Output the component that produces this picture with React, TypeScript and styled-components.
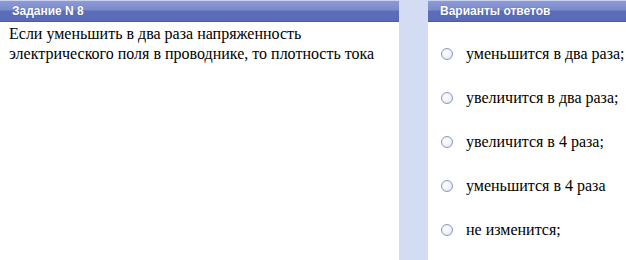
import React from 'react';
import styled, { createGlobalStyle } from 'styled-components';

const OPTIONS = [
  'уменьшится в два раза;',
  'увеличится в два раза;',
  'увеличится в 4 раза;',
  'уменьшится в 4 раза',
  'не изменится;',
];

const GlobalStyle = createGlobalStyle`
  html, body {
    margin: 0;
    padding: 0;
    background: #ffffff;
  }
  body {
    width: 626px;
    height: 260px;
    overflow: hidden;
  }
`;

const App = () => {
  return (
    <>
      <GlobalStyle />
      <Page>
        <Panel>
          <Header>Задание N 8</Header>
          <Question>
            Если уменьшить в два раза напряженность электрического поля в проводнике, то плотность тока
          </Question>
        </Panel>
        <Gutter />
        <Panel>
          <Header>Варианты ответов</Header>
          <AnswerList>
            {OPTIONS.map((text, idx) => (
              <Answer key={idx}>
                <Radio />
                <AnswerText>{text}</AnswerText>
              </Answer>
            ))}
          </AnswerList>
        </Panel>
      </Page>
    </>
  );
};

const Page = styled.div`
  display: grid;
  grid-template-columns: 399px 29px 198px;
  height: 260px;
  background: #ffffff;
`;

const Panel = styled.section`
  display: flex;
  flex-direction: column;
  background: #ffffff;
`;

const Gutter = styled.div`
  background: #d3dcf2;
`;

const Header = styled.div`
  height: 20px;
  padding-left: 12px;
  border-top: 1px solid #c9d1ee;
  border-bottom: 1px solid #4b5aa3;
  background: linear-gradient(to bottom, #8c9bd6 0%, #7a8acb 45%, #5d6db7 50%, #5a6ab4 100%);
  color: #ffffff;
  font-family: 'Liberation Sans', Arial, sans-serif;
  font-size: 12px;
  font-weight: bold;
  line-height: 20px;
  text-shadow: 0 0 1px rgba(40, 50, 110, 0.5);
`;

const Question = styled.p`
  margin: 0;
  padding: 2px 10px 0 9px;
  font-family: 'Liberation Serif', 'Times New Roman', 'DejaVu Serif', serif;
  font-size: 16px;
  line-height: 20px;
  color: #000000;
`;

const AnswerList = styled.div`
  display: flex;
  flex-direction: column;
  gap: 26px;
  padding: 23px 0 0 13px;
`;

const Answer = styled.div`
  display: flex;
  align-items: center;
  height: 18px;
`;

const Radio = styled.span`
  width: 10px;
  height: 10px;
  border-radius: 50%;
  border: 1px solid #8a98bc;
  background: radial-gradient(circle at 40% 40%, #ffffff 0%, #eef1f8 55%, #cfd7ea 100%);
  flex-shrink: 0;
`;

const AnswerText = styled.span`
  margin-left: 13px;
  font-family: 'Liberation Serif', 'Times New Roman', 'DejaVu Serif', serif;
  font-size: 16px;
  color: #000000;
  white-space: nowrap;
`;

export default App;
